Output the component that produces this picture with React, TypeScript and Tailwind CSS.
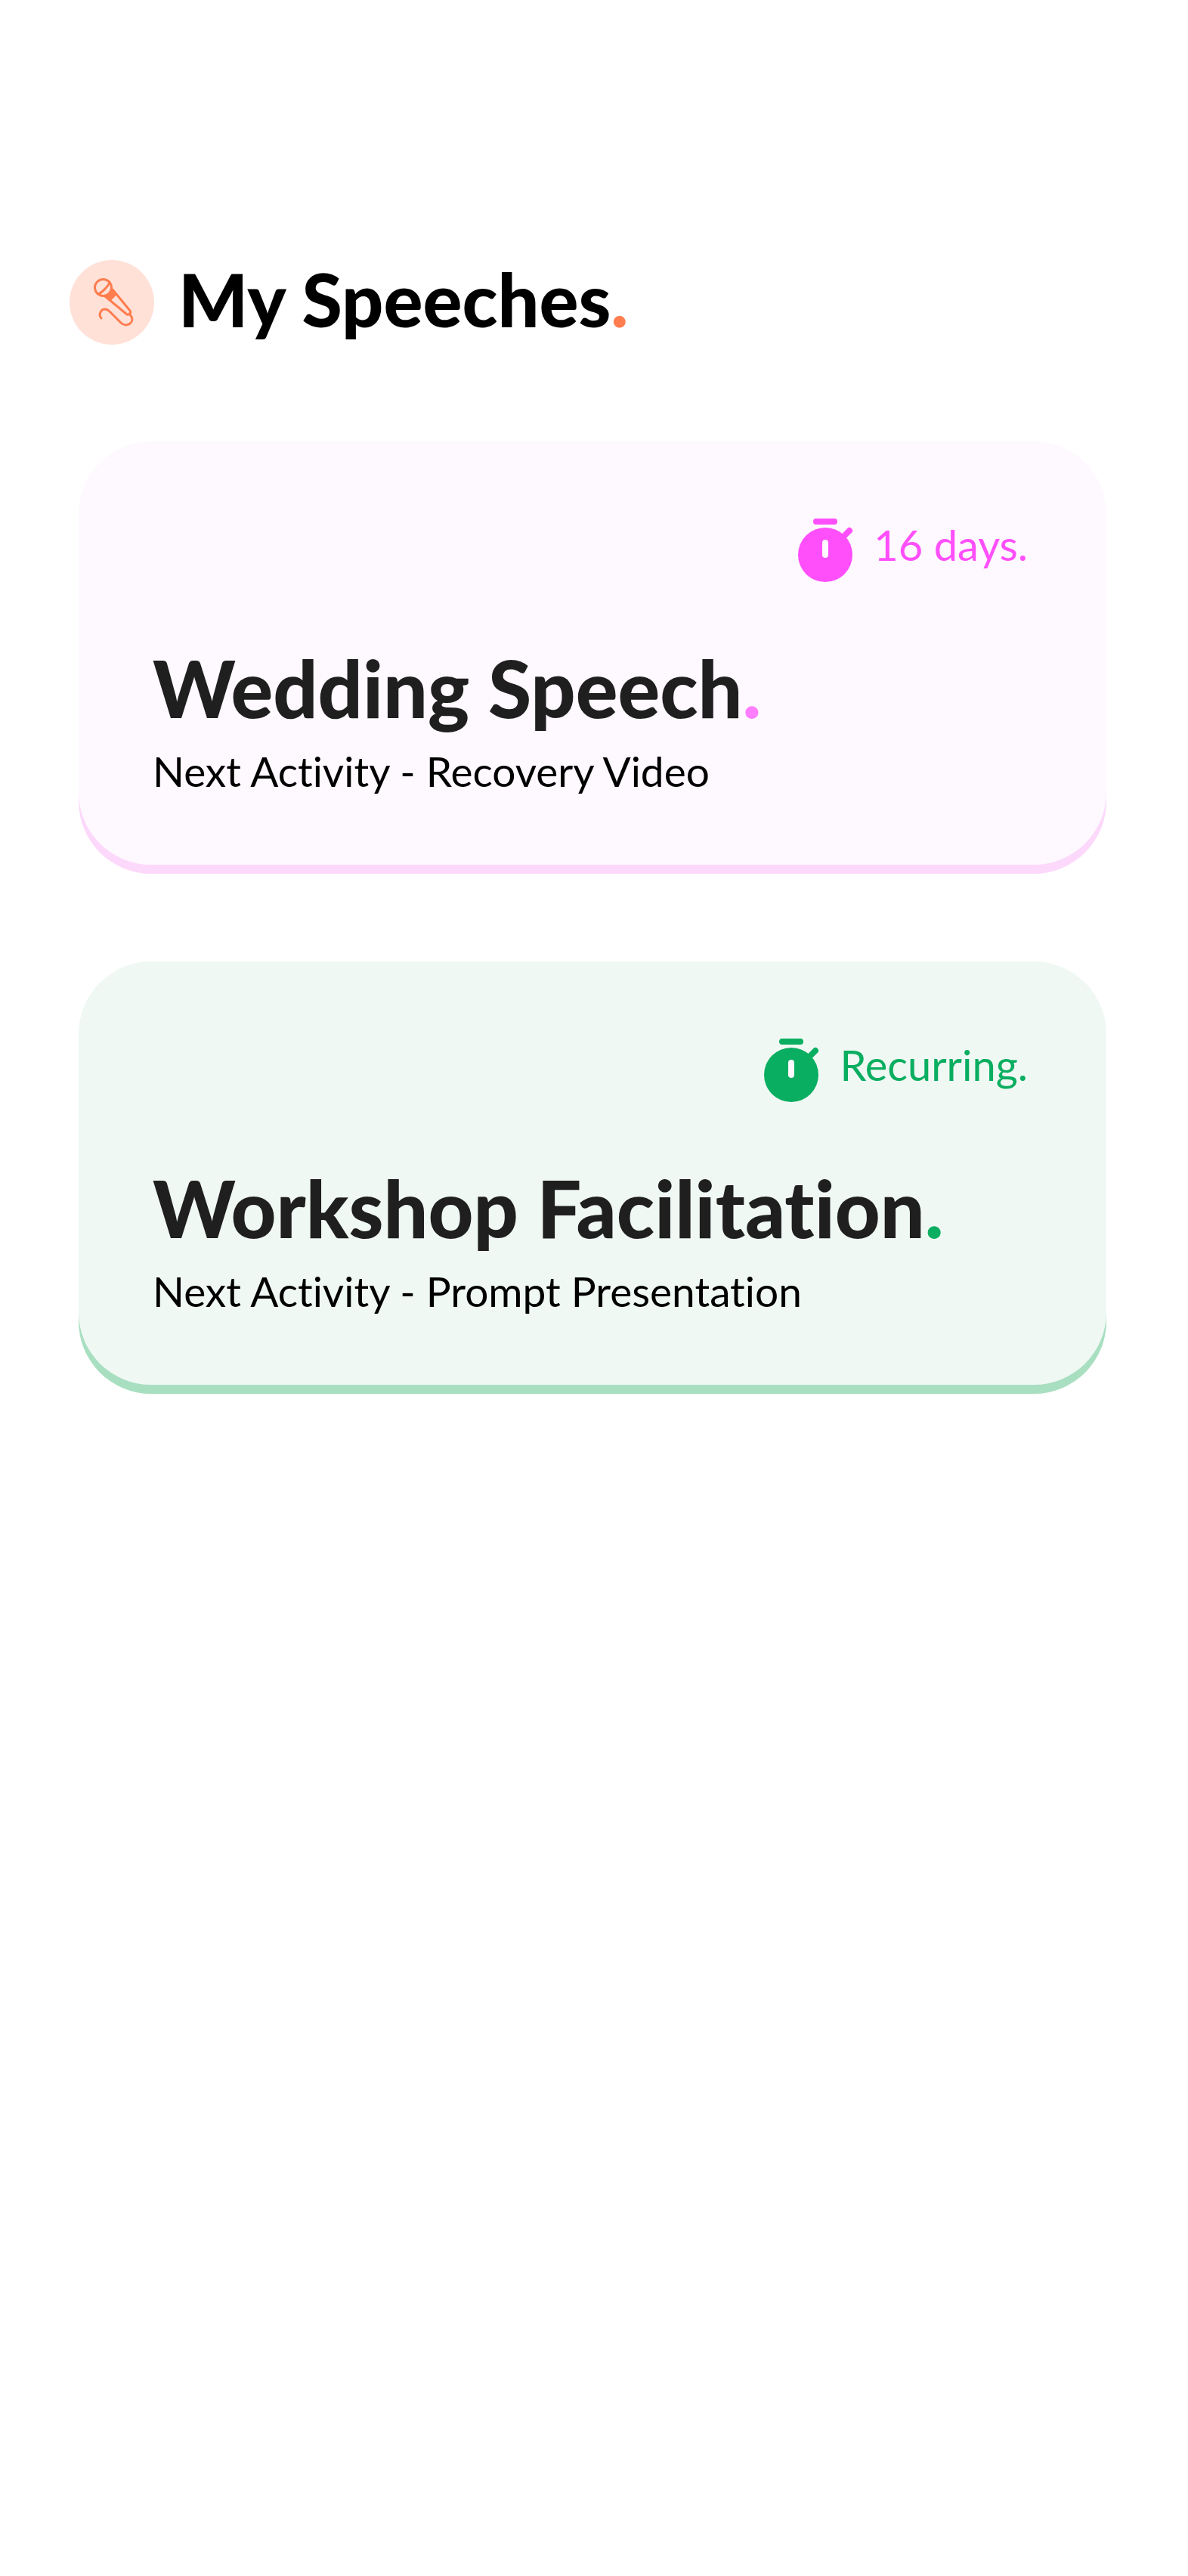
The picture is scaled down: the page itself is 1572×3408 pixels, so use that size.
type Speech = {
  title: string;
  next: string;
  due: string;
  card: string;
  status: string;
  dot: string;
};

const speeches: Speech[] = [
  {
    title: "Wedding Speech",
    next: "Recovery Video",
    due: "16 days.",
    card: "bg-[#fef8ff] shadow-[0_12px_0_0_#fcd9fb]",
    status: "text-[#ff4ffb]",
    dot: "text-[#ff7dff]",
  },
  {
    title: "Workshop Facilitation",
    next: "Prompt Presentation",
    due: "Recurring.",
    card: "bg-[#f0f8f4] shadow-[0_12px_0_0_#a9dfc1]",
    status: "text-[#0aae60]",
    dot: "text-[#0aae60]",
  },
];

function MicIcon() {
  return (
    <svg
      viewBox="0 0 112 112"
      className="size-28 shrink-0 rounded-full bg-[#ffe1d8]"
      fill="none"
      stroke="#ff7d4f"
      strokeWidth="3"
      strokeLinecap="round"
      strokeLinejoin="round"
      aria-hidden="true"
    >
      <circle cx="44.5" cy="36.5" r="11" />
      <path d="M38 45C43 43 52 34 53 29" />
      <path d="M56 39L61 46L54 53L48 48C52 46 55 43 56 39Z" fill="#ff7d4f" strokeWidth="2" />
      <path d="M57 39L80 67C82 70 79 73 76 72L47 48" />
      <path d="M42 77C38 73 41 65 47 65C50 65 52 67 53 68L68 83C75 90 86 83 82 75C81 74 81 73 79 71" />
    </svg>
  );
}

function StopwatchIcon() {
  return (
    <svg viewBox="0 0 72 84" className="h-[84px] w-[72px] shrink-0" aria-hidden="true">
      <rect x="20" width="32" height="8" rx="4" fill="currentColor" />
      <circle cx="36" cy="48" r="36" fill="currentColor" />
      <path d="M68 16L56 28" stroke="currentColor" strokeWidth="8" strokeLinecap="round" />
      <rect x="32" y="28" width="8" height="24" rx="4" fill="#fef8ff" />
    </svg>
  );
}

function SpeechCard({ title, next, due, card, status, dot }: Speech) {
  return (
    <article className={`rounded-[96px] pt-[102px] pr-[104px] pb-[90px] pl-[98px] ${card}`}>
      <div className={`flex items-start justify-end gap-7 ${status}`}>
        <StopwatchIcon />
        <p className="text-[56px] leading-[70px]">{due}</p>
      </div>
      <h2 className="mt-[78px] text-[104px] leading-[124px] font-black text-[#1f1f1f]">
        {title}
        <span className={dot}>.</span>
      </h2>
      <p className="mt-[14px] text-[55px] leading-[68px] text-black">Next Activity - {next}</p>
    </article>
  );
}

export default function App() {
  return (
    <main className="min-h-screen bg-white pt-[344px] pr-[108px] pb-32 pl-[104px] font-['Lato',sans-serif] [font-variant-ligatures:none]">
      <header className="-ml-3 flex items-start gap-8">
        <MicIcon />
        <h1 className="text-[97px] leading-[104px] font-black text-black">
          My Speeches<span className="text-[#ff7d4f]">.</span>
        </h1>
      </header>
      <section className="mt-32 flex flex-col gap-32">
        {speeches.map((speech) => (
          <SpeechCard key={speech.title} {...speech} />
        ))}
      </section>
    </main>
  );
}
